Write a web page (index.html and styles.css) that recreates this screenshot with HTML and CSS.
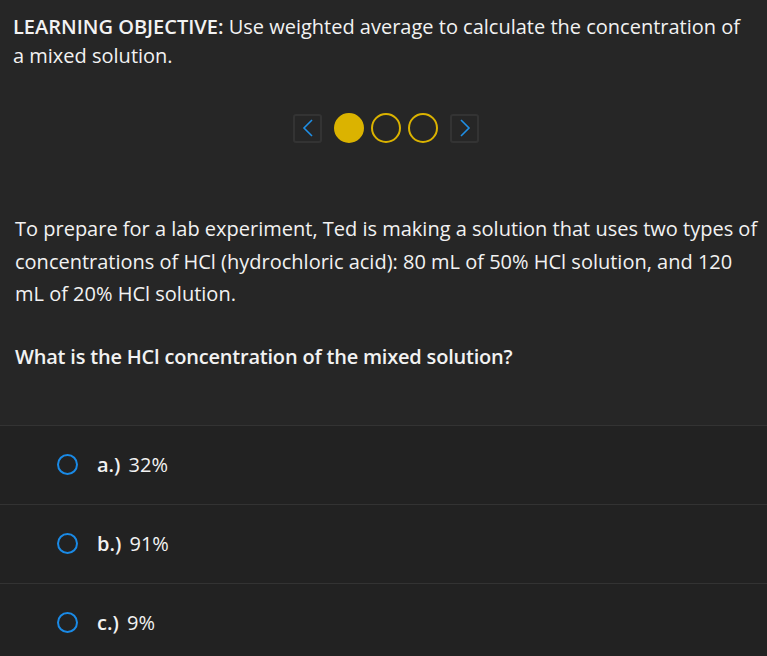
FILE: index.html
```html
<!DOCTYPE html>
<html>
<head>
<meta charset="utf-8">
<link rel="stylesheet" href="styles.css">
</head>
<body>
<div class="top">
  <p class="objective"><b>LEARNING OBJECTIVE: </b>Use weighted average to calculate the concentration of a mixed solution.</p>
  <div class="nav">
    <button class="arrow" aria-label="Previous"><svg width="12" height="18" viewBox="0 0 12 18"><path d="M10 1 L2 9 L10 17" fill="none" stroke="#1f8fe6" stroke-width="1.6"/></svg></button>
    <span class="dot filled"></span>
    <span class="dot"></span>
    <span class="dot"></span>
    <button class="arrow" aria-label="Next"><svg width="12" height="18" viewBox="0 0 12 18"><path d="M2 1 L10 9 L2 17" fill="none" stroke="#1f8fe6" stroke-width="1.6"/></svg></button>
  </div>
  <p class="passage">To prepare for a lab experiment, Ted is making a solution that uses two types of concentrations of HCl (hydrochloric acid): 80 mL of 50% HCl solution, and 120 mL of 20% HCl solution.</p>
  <p class="question">What is the HCl concentration of the mixed solution?</p>
</div>
<div class="options">
  <div class="option"><span class="radio"></span><span class="label"><b>a.)</b> 32%</span></div>
  <div class="option"><span class="radio"></span><span class="label"><b>b.)</b> 91%</span></div>
  <div class="option"><span class="radio"></span><span class="label"><b>c.)</b> 9%</span></div>
</div>
</body>
</html>
```
FILE: styles.css
```css
html, body {
  margin: 0;
  padding: 0;
  background: #222222;
  height: 100%;
}
body {
  font-family: "Open Sans", "Lato", sans-serif;
  color: #f2f2f2;
  font-size: 20px;
  overflow: hidden;
}
.top {
  background: #262626;
  padding: 12px 0 52px;
}
.objective {
  margin: 0;
  padding: 0 14px 0 13px;
  line-height: 29px;
}
.objective b {
  font-weight: 600;
}
.nav {
  margin-top: 43px;
  display: flex;
  justify-content: center;
  align-items: center;
  gap: 7px;
  padding-left: 5px;
}
.arrow {
  width: 29px;
  height: 29px;
  border: 2px solid #333333;
  border-radius: 3px;
  background: #262626;
  display: flex;
  align-items: center;
  justify-content: center;
  padding: 0;
  margin: 0 5px;
}
.dot {
  width: 30px;
  height: 30px;
  box-sizing: border-box;
  border-radius: 50%;
  border: 2px solid #dbb300;
}
.dot.filled {
  background: #dbb300;
}
.passage {
  margin: 70px 0 0;
  padding: 0 2px 0 15px;
  line-height: 32.5px;
}
.question {
  margin: 30px 0 0;
  padding: 0 15px;
  font-weight: 600;
  line-height: 32px;
  letter-spacing: -0.2px;
}
.options {
  background: #222222;
}
.option {
  height: 78px;
  border-top: 1px solid #333333;
  display: flex;
  align-items: center;
  padding-left: 57px;
}
.radio {
  width: 21px;
  height: 21px;
  box-sizing: border-box;
  border: 2.5px solid #1a8ae6;
  border-radius: 50%;
  margin-right: 19px;
}
.label b {
  font-weight: 600;
  margin-right: 3px;
}
```
